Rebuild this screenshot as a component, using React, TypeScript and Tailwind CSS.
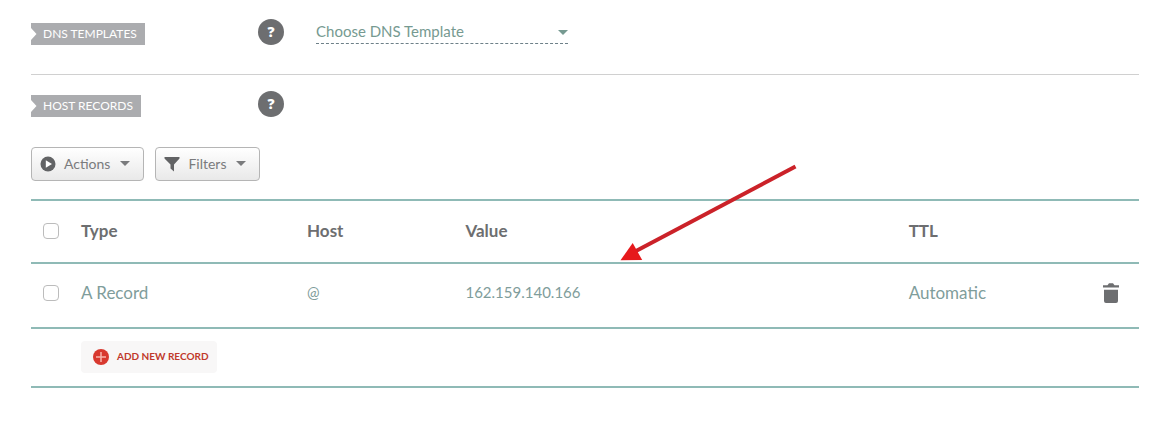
import type { ReactNode } from 'react'

const records = [
  { type: 'A Record', host: '@', value: '162.159.140.166', ttl: 'Automatic' },
]

const Caret = ({ className }: { className: string }) => (
  <svg viewBox="0 0 10 5" className={className} aria-hidden="true">
    <path d="M0 0h10L5 5z" fill="currentColor" />
  </svg>
)

const SectionLabel = ({ children }: { children: ReactNode }) => (
  <div className="w-[227px] shrink-0 flex">
    <h2 className="flex items-center h-[22px] bg-[#abacaf] text-white text-xs leading-none">
      <svg viewBox="0 0 6 22" className="w-[6px] h-[22px] mr-[6px]" aria-hidden="true">
        <path d="M0 5l5.500 6L0 17z" fill="#fff" />
      </svg>
      <span className="pr-2">{children}</span>
    </h2>
  </div>
)

const HelpButton = () => (
  <button
    type="button"
    className="w-[26px] h-[26px] shrink-0 rounded-full bg-[#6d6e70] text-white text-sm font-extrabold leading-none font-['Open_Sans',sans-serif]"
  >
    ?
  </button>
)

const ToolbarButton = ({ icon, children }: { icon: ReactNode; children: ReactNode }) => (
  <button
    type="button"
    className="flex items-center h-[34px] px-2 pb-px rounded border border-[#b5b5b5] bg-gradient-to-b from-white to-[#e9e9e9] text-[#7a7b7d] text-sm"
  >
    {icon}
    <span className="ml-2">{children}</span>
    <Caret className="w-[10px] h-[5px] ml-[10px] mr-[5px]" />
  </button>
)

const Checkbox = () => (
  <input
    type="checkbox"
    aria-label="Select"
    className="appearance-none block w-4 h-4 ml-3 rounded border border-[#bcbcbc] bg-white checked:bg-[#8dbab5]"
  />
)

const App = () => {
  return (
    <main className="pl-[31px] pr-[34px] pb-12 bg-white font-[Lato,sans-serif]">
      {/* DNS templates */}
      <section className="flex items-end pt-[19px] pb-[29px] border-b border-[#d0d0d0]">
        <SectionLabel>DNS TEMPLATES</SectionLabel>
        <HelpButton />
        <div className="relative self-center w-[252px] ml-8 text-[#769a91]">
          <select
            aria-label="Choose DNS Template"
            className="appearance-none block w-full h-6 pb-px text-[15px] bg-transparent border-b border-dashed border-[#6d8088]"
          >
            <option>Choose DNS Template</option>
          </select>
          <Caret className="absolute right-0 top-[10px] w-[10px] h-[5px] pointer-events-none" />
        </div>
      </section>

      {/* Host records */}
      <section>
        <div className="flex items-end pt-4">
          <SectionLabel>HOST RECORDS</SectionLabel>
          <HelpButton />
        </div>

        <div className="flex gap-[11px] mt-[30px]">
          <ToolbarButton
            icon={
              <svg viewBox="0 0 16 16" className="w-4 h-4" aria-hidden="true">
                <circle cx="8" cy="8" r="7.500" fill="#626365" />
                <path d="M5.800 4.200v7.600L12 8z" fill="#fff" />
              </svg>
            }
          >
            Actions
          </ToolbarButton>
          <ToolbarButton
            icon={
              <svg viewBox="0 0 16 16" className="w-4 h-4" aria-hidden="true">
                <path d="M.5 1h15v1.500L10 8.500v7L6.500 12.500v-4L.5 2.500z" fill="#626365" />
              </svg>
            }
          >
            Filters
          </ToolbarButton>
        </div>

        <div className="relative mt-[18px]">
          <table className="w-full table-fixed border-collapse text-left text-[17px]">
            <colgroup>
              <col className="w-[50px]" />
              <col className="w-[20.4%]" />
              <col className="w-[14.3%]" />
              <col className="w-[40%]" />
              <col />
              <col className="w-9" />
            </colgroup>
            <thead>
              <tr className="h-[63px] border-y-2 border-[#8fbab6] text-[#6d6e70]">
                <th className="pb-0.5"><Checkbox /></th>
                <th className="pb-0.5">Type</th>
                <th className="pb-0.5">Host</th>
                <th className="pb-0.5">Value</th>
                <th className="pb-0.5">TTL</th>
                <th></th>
              </tr>
            </thead>
            <tbody>
              {records.map((record) => (
                <tr key={record.value} className="h-[65px] border-b-2 border-[#8fbab6] text-[#7f9d9b]">
                  <td className="pb-1.5"><Checkbox /></td>
                  <td className="pb-1.5">{record.type}</td>
                  <td className="pb-1.5 text-[15px]">{record.host}</td>
                  <td className="pb-1.5 text-[15px]">{record.value}</td>
                  <td className="pb-1.5">{record.ttl}</td>
                  <td className="pb-1.5">
                    <button type="button" aria-label="Delete record" className="block">
                      <svg viewBox="0 0 16 20" className="w-4 h-5" aria-hidden="true">
                        <path
                          d="M0 2.200h4.500L6 .3h4l1.500 1.900H16v2.300H0zM1 6.800h14v11.200q0 2-2 2H3q-2 0-2-2z"
                          fill="#6d6e70"
                        />
                      </svg>
                    </button>
                  </td>
                </tr>
              ))}
              <tr className="h-[59px] border-b-2 border-[#8fbab6]">
                <td></td>
                <td colSpan={5} className="pb-0.5">
                  <button
                    type="button"
                    className="flex items-center h-8 pl-3 pr-2 rounded bg-[#f8f7f7] text-[#c0392b] text-[10px] font-bold"
                  >
                    <svg viewBox="0 0 16 16" className="w-4 h-4 mr-2" aria-hidden="true">
                      <circle cx="8" cy="8" r="8" fill="#d8392f" />
                      <path d="M8 3v10M3 8h10" stroke="#f6b5ad" strokeWidth="1.500" />
                    </svg>
                    ADD NEW RECORD
                  </button>
                </td>
              </tr>
            </tbody>
          </table>

          <svg
            viewBox="0 0 184 102"
            className="absolute left-[585px] top-[-37px] w-[184px] h-[102px] pointer-events-none"
            aria-hidden="true"
          >
            <path d="M179.500 4.500L20 89" stroke="#cb2229" strokeWidth="4" />
            <path d="M4.500 98.300L16.700 81l9.500 17z" fill="#e6191c" />
          </svg>
        </div>
      </section>
    </main>
  )
}

export default App
